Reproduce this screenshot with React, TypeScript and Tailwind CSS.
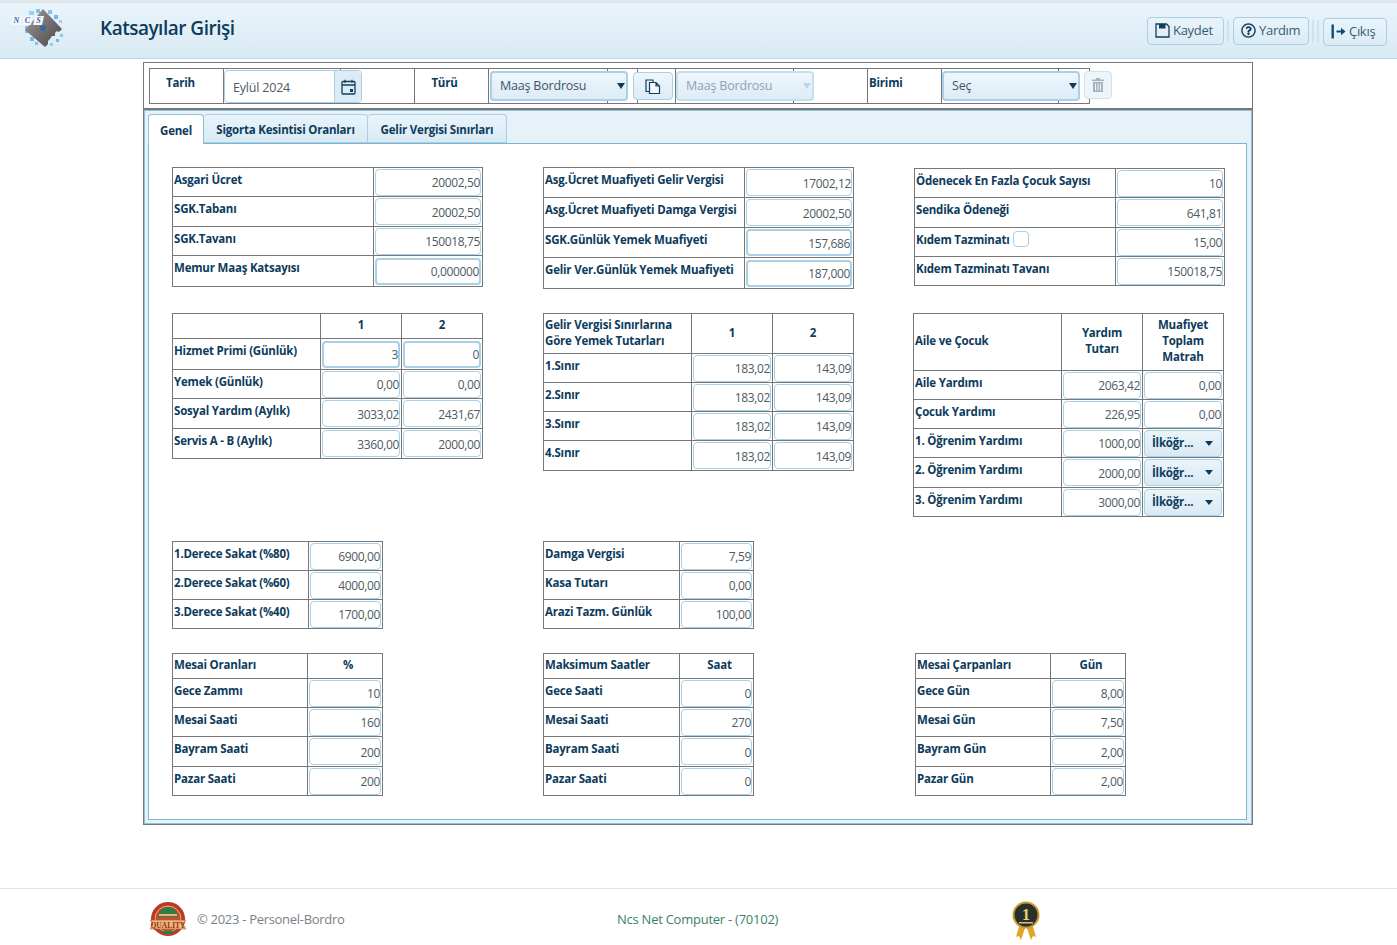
import { FaRegQuestionCircle } from "react-icons/fa"

type Cell = string | { v: string; strong?: boolean } | { sel: string }
type Row = { label: string; h: string; cells: Cell[]; check?: boolean }

function Box({ v, strong }: { v: string; strong?: boolean }) {
  return (
    <div
      className={`mx-px flex h-[27px] items-center justify-end overflow-hidden rounded-[4px] bg-white pt-[2px] text-[12px] tracking-[-0.35px] text-[#4d5a63] ${
        strong ? "border-2 border-[#a8d0e6]" : "border border-[#a8d0e6]"
      }`}
    >
      {v}
    </div>
  )
}

function MiniSelect({ v }: { v: string }) {
  return (
    <div className="mx-px flex h-[27px] items-center justify-between rounded-[4px] border border-[#a8d0e6] bg-gradient-to-b from-[#eaf4f9] to-[#d9eaf4] pr-[8px] pl-[7px] text-[11.5px] tracking-[-0.2px] font-bold text-[#0d3b5c]">
      <span>{v}</span>
      <span className="h-0 w-0 border-x-[4px] border-t-[5px] border-x-transparent border-t-[#0d3b5c]" />
    </div>
  )
}

function DataTable({
  width,
  cols,
  head,
  headH,
  rows,
}: {
  width: string
  cols: string[]
  head?: string[]
  headH?: string
  rows: Row[]
}) {
  return (
    <table className={`table-fixed border-collapse border border-[#777] ${width}`}>
      <colgroup>
        {cols.map((c, i) => (
          <col key={i} className={c} />
        ))}
      </colgroup>
      <tbody>
        {head && (
          <tr className={headH}>
            {head.map((t, i) => (
              <td
                key={i}
                className={`border border-[#777] pb-[2px] text-[11.5px] leading-[16px] tracking-[-0.2px] font-bold text-[#0d3b5c] ${
                  i === 0 ? "pl-px text-left" : cols.length === 2 ? "pl-[6px] text-center" : "px-[6px] text-center"
                }`}
              >
                {t}
              </td>
            ))}
          </tr>
        )}
        {rows.map((r) => (
          <tr key={r.label} className={r.h}>
            <td className="border border-[#777] pt-[3px] pl-px align-top text-[11.5px] leading-[18px] tracking-[-0.2px] font-bold whitespace-nowrap text-[#0d3b5c]">
              {r.label}
              {r.check && (
                <span className="ml-[3px] inline-block h-[16px] w-[16px] rounded-[4px] border border-[#a8d0e6] align-top" />
              )}
            </td>
            {r.cells.map((c, i) => (
              <td key={i} className="border border-[#777] p-0 align-middle">
                {typeof c === "string" ? (
                  <Box v={c} />
                ) : "sel" in c ? (
                  <MiniSelect v={c.sel} />
                ) : (
                  <Box v={c.v} strong={c.strong} />
                )}
              </td>
            ))}
          </tr>
        ))}
      </tbody>
    </table>
  )
}

function CalendarIcon() {
  return (
    <svg width="15" height="16" viewBox="0 0 15 16" fill="none" stroke="#123f5e" strokeWidth="1.3">
      <rect x="1" y="2.5" width="13" height="12.5" rx="1" />
      <path d="M1 6h13M4 0.8v3M11 0.8v3" />
      <rect x="9" y="10" width="3" height="3" fill="#123f5e" stroke="none" />
    </svg>
  )
}

function CopyIcon() {
  return (
    <svg width="16" height="15" viewBox="0 0 16 15" fill="none" stroke="#123f5e" strokeWidth="1.2">
      <path d="M4 12.5H1V1h7v2" />
      <path d="M4.5 3.5H11l3.5 3.5v7.5h-10zM11 3.5V7h3.5" fill="#f2f8fb" />
    </svg>
  )
}

function TrashIcon() {
  return (
    <svg width="12" height="14" viewBox="0 0 12 14" fill="#a4b3be">
      <rect x="0" y="1.5" width="12" height="1.6" />
      <rect x="4" y="0" width="4" height="2" />
      <path d="M1 4h10v10H1zM3 5.5v7h1v-7zM5.5 5.5v7h1v-7zM8 5.5v7h1v-7z" fillRule="evenodd" />
    </svg>
  )
}

function SaveIcon() {
  return (
    <svg width="15" height="15" viewBox="0 0 15 15" fill="none" stroke="#123f5e" strokeWidth="1.3">
      <path d="M1 1h10.5L14 3.5V14H1z" />
      <rect x="4" y="1" width="6.5" height="4.5" fill="#123f5e" stroke="none" />
    </svg>
  )
}

function ExitIcon() {
  return (
    <svg width="15" height="15" viewBox="0 0 15 15" fill="#0f4c75">
      <rect x="0.5" y="0.5" width="2.4" height="14" />
      <path d="M5.5 6.5h4.5V3.8l4.5 3.7-4.5 3.7V8.5H5.5z" />
    </svg>
  )
}

function NcsLogo() {
  return (
    <svg width="54" height="42" viewBox="0 0 54 42">
      <defs>
        <linearGradient id="ncsDisk" x1="0" y1="0" x2="1" y2="1">
          <stop offset="0" stopColor="#a59d9e" />
          <stop offset="0.55" stopColor="#6f6a6c" />
          <stop offset="1" stopColor="#4f4c4e" />
        </linearGradient>
      </defs>
      <g fill="#55aee8">
        <rect x="19" y="3" width="5" height="4" opacity="0.5" />
        <rect x="26" y="1" width="4" height="4" opacity="0.7" />
        <rect x="38" y="2" width="4" height="4" opacity="0.7" />
        <rect x="44" y="7" width="4" height="4" opacity="0.8" />
        <rect x="49" y="12" width="3" height="3" opacity="0.5" />
        <rect x="50" y="26" width="3" height="3" opacity="0.6" />
        <rect x="46" y="31" width="3" height="3" opacity="0.8" />
        <rect x="40" y="35" width="3" height="3" opacity="0.5" />
        <rect x="20" y="29" width="4" height="4" opacity="0.8" />
        <rect x="25" y="34" width="3" height="3" opacity="0.7" />
        <rect x="15" y="18" width="5" height="7" opacity="0.7" />
      </g>
      <path d="M33 1L52 21l-3 3-2-1-2 2 0 3-3 0-2 3-2 2 0 3-3 3L15 22z" fill="url(#ncsDisk)" />
      <circle cx="33" cy="20" r="3" fill="#2c6f9e" />
      <g fontFamily="'Liberation Serif', serif" fontSize="8" fontWeight="700" fontStyle="italic" fill="#3465a4" textAnchor="middle">
        <path d="M3 8h9l-2 9H1z" fill="#f4f7fb" />
        <path d="M14 8h9l-2 9h-9z" fill="#f4f7fb" />
        <path d="M25 8h9l-2 9h-9z" fill="#f4f7fb" />
        <text x="6.5" y="15">N</text>
        <text x="17.5" y="15">C</text>
        <text x="28.5" y="15">S</text>
      </g>
    </svg>
  )
}

function Seal() {
  return (
    <svg width="38" height="36" viewBox="0 0 38 36">
      <circle cx="19" cy="17" r="17" fill="#b93a2a" />
      <circle cx="19" cy="17" r="13" fill="#c9492f" stroke="#e7b56f" strokeWidth="1" />
      <path d="M9 15a10 10 0 0 1 20 0z" fill="#2f7d4a" />
      <rect x="10" y="12" width="18" height="2" fill="#e7b56f" />
      <path d="M1 18h36l-3 4 3 5H1l3-5z" fill="#e9b777" stroke="#a8662f" strokeWidth="0.6" />
      <text x="19" y="25.5" textAnchor="middle" fontFamily="'Liberation Serif', serif" fontSize="7.5" fontWeight="700" fill="#9c2f1e">
        QUALITY
      </text>
      <path d="M12 29h14l-3 3h-8z" fill="#2f7d4a" />
    </svg>
  )
}

function Medal() {
  return (
    <svg width="30" height="40" viewBox="0 0 30 40">
      <path d="M9 22l-4 14 3-1 2 4 5-15zM21 22l4 14-3-1-2 4-5-15z" fill="#e1a526" />
      <circle cx="15" cy="14" r="13.5" fill="#c99a2e" />
      <circle cx="15" cy="14" r="11.5" fill="#27302f" />
      <text x="15" y="19" textAnchor="middle" fontFamily="'Liberation Serif', serif" fontSize="16" fontWeight="700" fill="#f2cf6b">
        1
      </text>
      <rect x="8" y="21" width="14" height="1.5" fill="#d8c07a" />
    </svg>
  )
}

function HeaderButton({ icon, label, className }: { icon: React.ReactNode; label: string; className: string }) {
  return (
    <div
      className={`flex h-[28px] items-center gap-[3px] rounded-[4px] border border-[#a8d0e6] bg-gradient-to-b from-[#e9f4fa] to-[#dbebf5] text-[13px] tracking-[-0.3px] text-[#3b5b72] ${className}`}
    >
      {icon}
      <span>{label}</span>
    </div>
  )
}

function Select({ label, width, disabled }: { label: string; width: string; disabled?: boolean }) {
  return (
    <div
      className={`relative z-10 flex h-[30px] items-center justify-between rounded-[4px] border-2 bg-gradient-to-b from-[#eef6fb] to-[#dcecf6] pr-px pl-[8px] text-[12.5px] tracking-[-0.2px] ${width} ${
        disabled ? "border-[#c4e0ef] text-[#90a4b2]" : "border-[#a8d0e6] text-[#3f5566]"
      }`}
    >
      <span>{label}</span>
      <span
        className={`h-0 w-0 border-x-[4px] border-t-[6px] border-x-transparent ${
          disabled ? "border-t-[#b9d8e8]" : "border-t-[#0d3b5c]"
        }`}
      />
    </div>
  )
}

const wide = ["w-[201px]", "w-[109px]"]
const triple = ["w-[148px]", "w-[81px]", "w-[81px]"]

export default function App() {
  return (
    <div className="min-h-[945px] bg-white font-['Open_Sans','Noto_Sans',sans-serif] text-[#0d3b5c]">
      <header className="flex h-[59px] items-center justify-between border-t-[3px] border-b border-t-[#dfe6ea] border-b-[#b5d8ea] bg-gradient-to-b from-[#e9f4fa] to-[#d9eaf4]">
        <div className="flex items-center">
          <div className="ml-[10px] w-[90px] pb-[3px]">
            <NcsLogo />
          </div>
          <h1 className="pb-[4px] text-[19px] leading-none font-semibold tracking-[-0.5px] text-[#0d3b5c]">Katsayılar Girişi</h1>
        </div>
        <div className="mr-[10px] flex items-center">
          <HeaderButton icon={<SaveIcon />} label="Kaydet" className="w-[77px] pl-[7px]" />
          <span className="mx-[3px] h-[22px] w-[2px] bg-[#cfe3ef]" />
          <HeaderButton
            icon={<FaRegQuestionCircle className="text-[15px] text-[#123f5e]" />}
            label="Yardım"
            className="ml-[1px] w-[76px] pl-[7px]"
          />
          <span className="ml-[3px] h-[22px] w-[2px] bg-[#cfe3ef]" />
          <span className="mx-[3px] h-[22px] w-[2px] bg-[#cfe3ef]" />
          <HeaderButton icon={<ExitIcon />} label="Çıkış" className="mt-[2px] ml-[1px] w-[64px] pl-[7px]" />
        </div>
      </header>

      <main className="mt-[3px] ml-[143px] w-[1110px] border border-[#777]">
        <div className="h-[47px] border-b-2 border-[#777] pt-[5px] pl-[5px]">
          <div className="flex items-start">
            <table className="h-[35px] w-[940px] table-fixed border-collapse border border-[#777]">
              <colgroup>
                <col className="w-[74px]" />
                <col className="w-[117px]" />
                <col className="w-[74px]" />
                <col className="w-[74px]" />
                <col className="w-[119px]" />
                <col className="w-[30px]" />
                <col className="w-[38px]" />
                <col className="w-[118px]" />
                <col className="w-[74px]" />
                <col className="w-[74px]" />
                <col className="w-[117px]" />
                <col className="w-[31px]" />
              </colgroup>
              <tbody>
                <tr>
                  <td className="border border-[#777] pr-[12px] pb-[7px] text-center text-[11.5px] tracking-[-0.2px] font-bold">Tarih</td>
                  <td className="border border-[#777] p-0 align-top">
                    <div className="relative z-10 mt-[1px] flex h-[33px] w-[138px] items-stretch overflow-hidden rounded-[4px] border border-[#a8d0e6] bg-white">
                      <span className="flex-1 pt-[8px] pl-[8px] text-[12.5px] tracking-[-0.2px] text-[#4d5a63]">Eylül 2024</span>
                      <span className="flex w-[27px] items-center justify-center border-l border-[#a8d0e6] bg-[#dcecf6]">
                        <CalendarIcon />
                      </span>
                    </div>
                  </td>
                  <td className="border border-[#777]" />
                  <td className="border border-[#777] pr-[14px] pb-[7px] text-center text-[11.5px] tracking-[-0.2px] font-bold">Türü</td>
                  <td className="border border-[#777] p-0">
                    <div className="ml-[1px]">
                      <Select label="Maaş Bordrosu" width="w-[138px]" />
                    </div>
                  </td>
                  <td className="border border-[#777]" />
                  <td className="border border-[#777] p-0">
                    <div className="relative z-10 -ml-[5px] flex h-[28px] w-[40px] items-center justify-center rounded-[4px] border border-[#a8d0e6] bg-gradient-to-b from-[#eef6fb] to-[#dcecf6]">
                      <CopyIcon />
                    </div>
                  </td>
                  <td className="border border-[#777] p-0">
                    <Select label="Maaş Bordrosu" width="w-[138px]" disabled />
                  </td>
                  <td className="border border-[#777]" />
                  <td className="border border-[#777] pb-[7px] pl-[1px] text-[11.5px] tracking-[-0.2px] font-bold">Birimi</td>
                  <td className="border border-[#777] p-0">
                    <Select label="Seç" width="w-[138px]" />
                  </td>
                  <td className="border border-[#777]" />
                </tr>
              </tbody>
            </table>
            <div className="mt-[3px] ml-[-6px] flex h-[28px] w-[28px] items-center justify-center rounded-[4px] border border-[#cfe3ef] bg-[#edf5fa]">
              <TrashIcon />
            </div>
          </div>
        </div>

        <section className="border border-[#8fc0dc] bg-[#e6f1f8] pt-[3px] pr-[4px] pb-[3px] pl-[3px]">
          <nav className="relative z-10 flex h-[30px] text-[11.5px] tracking-[-0.2px] font-bold text-[#0d3b5c]">
            <span className="flex w-[56px] items-center justify-center rounded-t-[4px] border border-b-0 border-[#8fc0dc] bg-white pt-[2px]">Genel</span>
            <span className="flex h-[29px] w-[164px] items-center justify-center rounded-t-[4px] border border-l-0 border-[#a8d0e6] bg-gradient-to-b from-[#e9f4fa] to-[#d9eaf4] pt-[2px]">
              Sigorta Kesintisi Oranları
            </span>
            <span className="flex h-[29px] w-[139px] items-center justify-center rounded-t-[4px] border border-l-0 border-[#a8d0e6] bg-gradient-to-b from-[#e9f4fa] to-[#d9eaf4] pt-[2px]">
              Gelir Vergisi Sınırları
            </span>
          </nav>
          <div className="-mt-px flex h-[677px] flex-col border border-[#7bb3d3] bg-white pt-[23px] pl-[23px]">
            <div className="grid grid-cols-[371px_371px_311px] items-start">
              <DataTable
                width="w-[310px]"
                cols={wide}
                rows={[
                  { label: "Asgari Ücret", h: "h-[29px]", cells: ["20002,50"] },
                  { label: "SGK.Tabanı", h: "h-[30px]", cells: ["20002,50"] },
                  { label: "SGK.Tavanı", h: "h-[29px]", cells: ["150018,75"] },
                  { label: "Memur Maaş Katsayısı", h: "h-[31px]", cells: [{ v: "0,000000", strong: true }] },
                ]}
              />
              <DataTable
                width="w-[310px]"
                cols={wide}
                rows={[
                  { label: "Asg.Ücret Muafiyeti Gelir Vergisi", h: "h-[30px]", cells: ["17002,12"] },
                  { label: "Asg.Ücret Muafiyeti Damga Vergisi", h: "h-[30px]", cells: ["20002,50"] },
                  { label: "SGK.Günlük Yemek Muafiyeti", h: "h-[30px]", cells: [{ v: "157,686", strong: true }] },
                  { label: "Gelir Ver.Günlük Yemek Muafiyeti", h: "h-[31px]", cells: [{ v: "187,000", strong: true }] },
                ]}
              />
              <div className="mt-px">
                <DataTable
                  width="w-[310px]"
                  cols={wide}
                  rows={[
                    { label: "Ödenecek En Fazla Çocuk Sayısı", h: "h-[29px]", cells: ["10"] },
                    { label: "Sendika Ödeneği", h: "h-[30px]", cells: ["641,81"] },
                    { label: "Kıdem Tazminatı", h: "h-[29px]", cells: ["15,00"], check: true },
                    { label: "Kıdem Tazminatı Tavanı", h: "h-[29px]", cells: ["150018,75"] },
                  ]}
                />
              </div>
            </div>

            <div className="mt-[24px] grid h-[203px] grid-cols-[371px_371px_311px] items-start">
              <DataTable
                width="w-[310px]"
                cols={triple}
                head={["", "1", "2"]}
                headH="h-[25px]"
                rows={[
                  { label: "Hizmet Primi (Günlük)", h: "h-[31px]", cells: [{ v: "3", strong: true }, { v: "0", strong: true }] },
                  { label: "Yemek (Günlük)", h: "h-[29px]", cells: ["0,00", "0,00"] },
                  { label: "Sosyal Yardım (Aylık)", h: "h-[30px]", cells: ["3033,02", "2431,67"] },
                  { label: "Servis A - B (Aylık)", h: "h-[30px]", cells: ["3360,00", "2000,00"] },
                ]}
              />
              <DataTable
                width="w-[310px]"
                cols={triple}
                head={["Gelir Vergisi Sınırlarına Göre Yemek Tutarları", "1", "2"]}
                headH="h-[40px]"
                rows={[
                  { label: "1.Sınır", h: "h-[29px]", cells: ["183,02", "143,09"] },
                  { label: "2.Sınır", h: "h-[29px]", cells: ["183,02", "143,09"] },
                  { label: "3.Sınır", h: "h-[29px]", cells: ["183,02", "143,09"] },
                  { label: "4.Sınır", h: "h-[30px]", cells: ["183,02", "143,09"] },
                ]}
              />
              <div className="-ml-px">
                <DataTable
                  width="w-[310px]"
                  cols={triple}
                  head={["Aile ve Çocuk", "Yardım Tutarı", "Muafiyet Toplam Matrah"]}
                  headH="h-[57px]"
                  rows={[
                    { label: "Aile Yardımı", h: "h-[29px]", cells: ["2063,42", "0,00"] },
                    { label: "Çocuk Yardımı", h: "h-[29px]", cells: ["226,95", "0,00"] },
                    { label: "1. Öğrenim Yardımı", h: "h-[29px]", cells: ["1000,00", { sel: "İlköğr..." }] },
                    { label: "2. Öğrenim Yardımı", h: "h-[30px]", cells: ["2000,00", { sel: "İlköğr..." }] },
                    { label: "3. Öğrenim Yardımı", h: "h-[29px]", cells: ["3000,00", { sel: "İlköğr..." }] },
                  ]}
                />
              </div>
            </div>

            <div className="mt-[25px] grid grid-cols-[371px_371px_311px] items-start">
              <DataTable
                width="w-[210px]"
                cols={["w-[136px]", "w-[74px]"]}
                rows={[
                  { label: "1.Derece Sakat (%80)", h: "h-[29px]", cells: ["6900,00"] },
                  { label: "2.Derece Sakat (%60)", h: "h-[29px]", cells: ["4000,00"] },
                  { label: "3.Derece Sakat (%40)", h: "h-[29px]", cells: ["1700,00"] },
                ]}
              />
              <DataTable
                width="w-[210px]"
                cols={["w-[136px]", "w-[74px]"]}
                rows={[
                  { label: "Damga Vergisi", h: "h-[29px]", cells: ["7,59"] },
                  { label: "Kasa Tutarı", h: "h-[29px]", cells: ["0,00"] },
                  { label: "Arazi Tazm. Günlük", h: "h-[29px]", cells: ["100,00"] },
                ]}
              />
            </div>

            <div className="mt-[24px] grid grid-cols-[371px_371px_311px] items-start">
              <DataTable
                width="w-[210px]"
                cols={["w-[135px]", "w-[75px]"]}
                head={["Mesai Oranları", "%"]}
                headH="h-[25px]"
                rows={[
                  { label: "Gece Zammı", h: "h-[29px]", cells: ["10"] },
                  { label: "Mesai Saati", h: "h-[29px]", cells: ["160"] },
                  { label: "Bayram Saati", h: "h-[30px]", cells: ["200"] },
                  { label: "Pazar Saati", h: "h-[29px]", cells: ["200"] },
                ]}
              />
              <DataTable
                width="w-[210px]"
                cols={["w-[136px]", "w-[74px]"]}
                head={["Maksimum Saatler", "Saat"]}
                headH="h-[25px]"
                rows={[
                  { label: "Gece Saati", h: "h-[29px]", cells: ["0"] },
                  { label: "Mesai Saati", h: "h-[29px]", cells: ["270"] },
                  { label: "Bayram Saati", h: "h-[30px]", cells: ["0"] },
                  { label: "Pazar Saati", h: "h-[29px]", cells: ["0"] },
                ]}
              />
              <div className="ml-px">
                <DataTable
                  width="w-[210px]"
                  cols={["w-[135px]", "w-[75px]"]}
                  head={["Mesai Çarpanları", "Gün"]}
                  headH="h-[25px]"
                  rows={[
                    { label: "Gece Gün", h: "h-[29px]", cells: ["8,00"] },
                    { label: "Mesai Gün", h: "h-[29px]", cells: ["7,50"] },
                    { label: "Bayram Gün", h: "h-[30px]", cells: ["2,00"] },
                    { label: "Pazar Gün", h: "h-[29px]", cells: ["2,00"] },
                  ]}
                />
              </div>
            </div>
          </div>
        </section>
      </main>

      <footer className="mt-[63px] flex h-[57px] items-start border-t border-[#e5e5e5] pl-[149px] text-[13px]">
        <div className="mt-[13px] w-[48px]">
          <Seal />
        </div>
        <span className="mt-[21px] w-[420px] tracking-[-0.3px] text-[#7a7f85]">© 2023 - Personel-Bordro</span>
        <span className="mt-[21px] w-[395px] tracking-[-0.25px] text-[#3b7f6a]">Ncs Net Computer - (70102)</span>
        <div className="mt-[12px] -ml-px">
          <Medal />
        </div>
      </footer>
    </div>
  )
}
